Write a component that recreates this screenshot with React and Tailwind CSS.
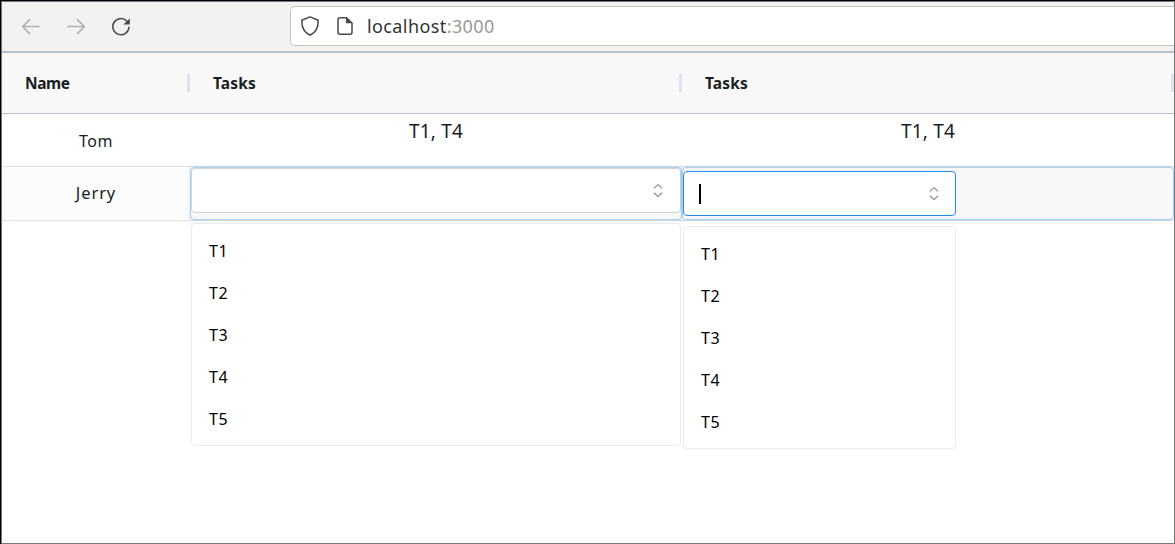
const ITEMS = ['T1', 'T2', 'T3', 'T4', 'T5'];

function Selector() {
  return (
    <svg width="18" height="18" viewBox="0 0 18 18" fill="none" stroke="#868e96" strokeWidth="1.15" strokeLinecap="round" strokeLinejoin="round">
      <path d="M5.2 6.2l3.8-3.6 3.8 3.6M5.2 11l3.8 3.6 3.8-3.6" />
    </svg>
  );
}

function Dropdown({ className }) {
  return (
    <ul className={'absolute h-[223px] rounded-[4px] border border-[#e9ecef] bg-white py-1.5 ' + className}>
      {ITEMS.map((t) => (
        <li key={t} className="flex h-[42px] items-center pl-[17px] text-[16px] leading-none tracking-[0.6px] text-black">{t}</li>
      ))}
    </ul>
  );
}

function HeaderCell({ label, labelClass, className }) {
  return (
    <div className={'flex items-center justify-between pl-[23px] ' + className}>
      <span className={'pt-[2px] text-[15.5px] font-bold leading-none ' + labelClass}>{label}</span>
      <span className="h-[18px] w-[3px] bg-[#dde2eb]" />
    </div>
  );
}

function Toolbar() {
  return (
    <div className="flex h-[51px] shrink-0 items-start border-b-2 border-[#babfc7] bg-[#f4f2f0]">
      <div className="flex w-[288px] gap-[25px] pl-[19px] pt-[15px]">
        <svg width="20" height="20" viewBox="0 0 20 20" fill="none" stroke="#b2b1b0" strokeWidth="1.5" strokeLinecap="round" strokeLinejoin="round">
          <path d="M18 9.6H1.8M8.6 2.6l-7 7 7 7" />
        </svg>
        <svg width="20" height="20" viewBox="0 0 20 20" fill="none" stroke="#b2b1b0" strokeWidth="1.5" strokeLinecap="round" strokeLinejoin="round">
          <path d="M2 9.6h16.2M11.4 2.6l7 7-7 7" />
        </svg>
        <svg width="20" height="20" viewBox="0 0 20 20" fill="none">
          <path d="M15.6 3.9A8.1 8.1 0 1 0 18 10.2" stroke="#484848" strokeWidth="1.5" strokeLinecap="round" />
          <path d="M18.8 1.4v6.2h-6.4z" fill="#484848" />
        </svg>
      </div>
      <div className="mt-1 flex h-10 flex-1 items-center rounded-l-[5px] border border-r-0 border-[#c6c3bf] bg-white pl-[9px]">
        <svg width="20" height="22" viewBox="0 0 20 22" fill="none" stroke="#484848" strokeWidth="1.5" strokeLinejoin="round">
          <path d="M10 1.9 18.2 5.2C18.4 12 16 17.5 10 20.2 4 17.5 1.6 12 1.8 5.2z" />
        </svg>
        <svg className="ml-[16px]" width="18" height="22" viewBox="0 0 18 22">
          <path d="M10.5 2.8H4Q2 2.8 2 4.8V17.2Q2 19.2 4 19.2H14Q16 19.2 16 17.2V8z" fill="none" stroke="#484848" strokeWidth="1.5" />
          <path d="M10 2.2v6h6.6z" fill="#484848" />
        </svg>
        <span className="ml-[13px] text-[18px] leading-none tracking-[0.4px] text-[#333]">localhost<span className="text-[#999]">:3000</span></span>
      </div>
    </div>
  );
}

export default function App() {
  return (
    <div className="h-[544px] w-[1175px] overflow-hidden border-l border-t border-black bg-white font-['Noto_Sans',sans-serif] text-[#181d1f]">
      <div className="flex h-[543px] w-[1174px] flex-col overflow-hidden border border-[#77767a]">
        <Toolbar />
        <div className="flex h-[61px] shrink-0 border-b border-[#babfc7] bg-[#f8f8f8]">
          <HeaderCell label="Name" labelClass="tracking-[-0.4px]" className="w-[188px] shrink-0" />
          <HeaderCell label="Tasks" labelClass="tracking-[0.15px]" className="w-[492px] shrink-0 pl-[22px]" />
          <HeaderCell label="Tasks" labelClass="tracking-[0.15px]" className="flex-1" />
        </div>
        <div className="flex h-[53px] shrink-0 border-b border-[#dde2eb] text-[19px] leading-[34px] tracking-[0.2px]">
          <div className="flex w-[188px] shrink-0 items-center justify-center pt-[2px] text-[16px] tracking-[0.6px]">Tom</div>
          <div className="w-[492px] shrink-0 text-center">T1, T4</div>
          <div className="flex-1 text-center">T1, T4</div>
        </div>
        <div className="flex h-[54px] shrink-0 border-b border-[#dde2eb] bg-[#fcfcfc]">
          <div className="flex w-[188px] shrink-0 items-center justify-center text-[16.5px] tracking-[0.9px]">Jerry</div>
          <div className="relative h-[53px] w-[492px] shrink-0 rounded-[4px] border border-[#a6d2f4] bg-[#f8f8f8] shadow-[0_0_4px_rgba(0,0,0,0.12)]">
            <div className="flex h-[45px] w-[490px] items-center justify-end rounded-[4px] border border-[#ced4da] bg-white pr-[13px]">
              <Selector />
            </div>
            <Dropdown className="left-0 top-[55px] w-[490px]" />
          </div>
          <div className="relative h-[53px] w-[492px] shrink-0 rounded-[4px] border border-[#a6d2f4] bg-[#f8f8f8] pt-[3px] shadow-[0_0_4px_rgba(0,0,0,0.12)]">
            <div className="flex h-[45px] w-[273px] items-center justify-between rounded-[4px] border border-[#228be6] bg-white pl-[15px] pr-[12px]">
              <span className="h-5 w-0.5 bg-black" />
              <Selector />
            </div>
            <Dropdown className="left-0 top-[58px] w-[273px]" />
          </div>
        </div>
      </div>
    </div>
  );
}
